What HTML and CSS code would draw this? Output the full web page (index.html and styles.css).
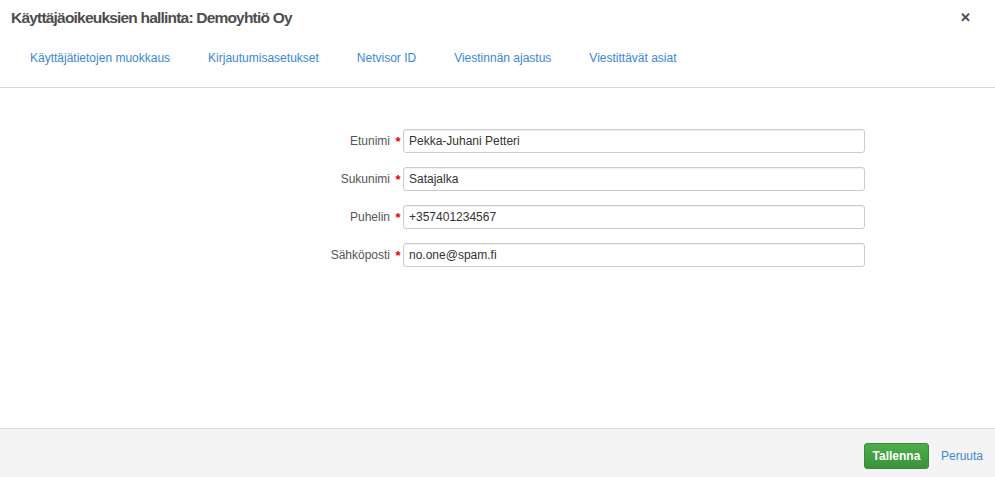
FILE: index.html
```html
<!DOCTYPE html>
<html lang="fi">
<head>
<meta charset="utf-8">
<title>Käyttäjäoikeuksien hallinta</title>
<link rel="stylesheet" href="styles.css">
</head>
<body>
<div class="modal">
  <header class="modal-header">
    <div class="title-row">
      <h1 class="title">Käyttäjäoikeuksien hallinta: Demoyhtiö Oy</h1>
      <span class="close">&#x2715;</span>
    </div>
    <nav class="tabs">
      <a class="tab">Käyttäjätietojen muokkaus</a>
      <a class="tab">Kirjautumisasetukset</a>
      <a class="tab">Netvisor ID</a>
      <a class="tab">Viestinnän ajastus</a>
      <a class="tab">Viestittävät asiat</a>
    </nav>
  </header>
  <main class="modal-body">
    <form class="form">
      <label class="label">Etunimi</label><span class="req">*</span><input class="input" value="Pekka-Juhani Petteri">
      <label class="label">Sukunimi</label><span class="req">*</span><input class="input" value="Satajalka">
      <label class="label">Puhelin</label><span class="req">*</span><input class="input" value="+357401234567">
      <label class="label">Sähköposti</label><span class="req">*</span><input class="input" value="no.one@spam.fi">
    </form>
  </main>
  <footer class="modal-footer">
    <button class="btn-save" type="button">Tallenna</button>
    <a class="cancel">Peruuta</a>
  </footer>
</div>
</body>
</html>
```

FILE: styles.css
```css
* { box-sizing: border-box; }
html, body { margin: 0; padding: 0; height: 100%; }
body {
  font-family: "Liberation Sans", Arial, sans-serif;
  font-size: 12px;
  color: #333;
  background: #fff;
  overflow: hidden;
}
.modal {
  display: flex;
  flex-direction: column;
  height: 100vh;
}
.modal-header {
  border-bottom: 1px solid #d3dadf;
  padding: 8px 0 19px 0;
}
.title-row {
  display: flex;
  align-items: center;
  justify-content: space-between;
  padding: 0 24px 0 11px;
  height: 20px;
}
.title {
  margin: 0;
  font-size: 15.5px;
  letter-spacing: -0.8px;
  font-weight: bold;
  color: #4d4d4d;
  line-height: 20px;
}
.close {
  font-size: 13px;
  font-weight: bold;
  color: #4a4a4a;
  line-height: 20px;
}
.tabs {
  display: flex;
  gap: 38px;
  padding-left: 30px;
  margin-top: 20px;
  height: 20px;
  align-items: center;
}
.tab {
  color: #3a88d8;
  font-size: 12px;
  line-height: 20px;
  text-decoration: none;
}
.modal-body {
  flex: 1;
  padding-top: 41px;
}
.form {
  display: grid;
  grid-template-columns: 390px 13px 462px;
  row-gap: 14px;
  align-items: center;
}
.label {
  text-align: right;
  color: #555;
  font-size: 12px;
}
.req {
  color: #e60000;
  font-size: 13px;
  padding-left: 3px;
  text-align: center;
  font-weight: bold;
}
.input {
  height: 24px;
  width: 462px;
  border: 1px solid #cccccc;
  border-radius: 3px;
  box-shadow: inset 0 1px 1px rgba(0,0,0,0.06);
  padding: 0 5px;
  font-family: "Liberation Sans", Arial, sans-serif;
  font-size: 12px;
  color: #333;
  margin: 0;
}
.modal-footer {
  height: 49px;
  border-top: 1px solid #cfdce6;
  background: #f4f4f4;
  display: flex;
  justify-content: flex-end;
  align-items: flex-start;
  padding: 14px 12px 0 0;
  gap: 12px;
}
.btn-save {
  width: 65px;
  height: 26px;
  border: 1px solid #3a8a3a;
  border-radius: 3px;
  background: linear-gradient(#4cae4c, #3a933a);
  color: #fff;
  font-family: "Liberation Sans", Arial, sans-serif;
  font-size: 12px;
  font-weight: bold;
  padding: 0;
}
.cancel {
  color: #3a88d8;
  font-size: 12px;
  line-height: 26px;
  text-decoration: none;
}
```
